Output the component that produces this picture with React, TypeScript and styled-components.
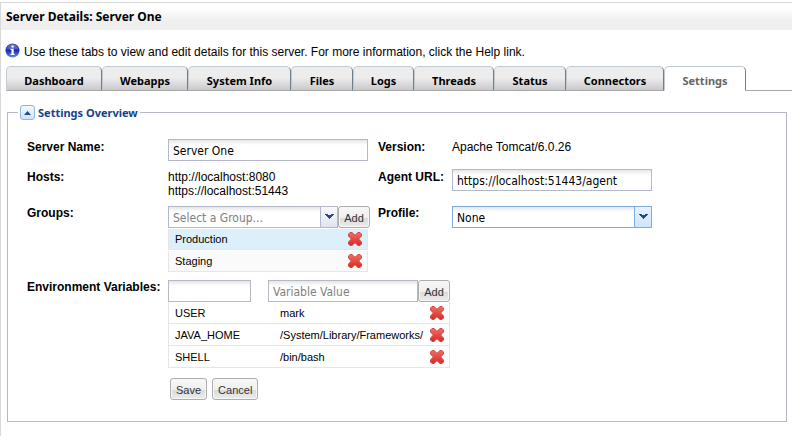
import React, { useState } from 'react';
import styled, { createGlobalStyle, css } from 'styled-components';

const heading = '"Noto Sans", Tahoma, sans-serif';
const ui = '"DejaVu Sans Condensed", Tahoma, sans-serif';
const body = '"Liberation Sans", Arial, sans-serif';

const GlobalStyle = createGlobalStyle`
  *, *::before, *::after { box-sizing: border-box; }
  body { margin: 0; background: #fff; color: #000; font: 12px/14px ${body}; }
  button, input, select { margin: 0; font: inherit; color: inherit; }
`;

const Page = styled.div`
  margin-top: 2px;
  min-height: calc(100vh - 2px);
  border: solid #d9d9d9;
  border-width: 1px 0 0 1px;
`;

const TitleBar = styled.header`
  height: 27px;
  padding: 0 5px;
  background: linear-gradient(#fff 20%, #efefef 65%);
`;

const Title = styled.h1`
  margin: 0;
  font: bold 12px/27px ${heading};
`;

const Notice = styled.p`
  display: flex;
  align-items: flex-start;
  gap: 4px;
  height: 16px;
  margin: 13px 4px 7px;
  line-height: 18px;
  svg { flex: none; }
`;

const TabBar = styled.div`
  display: flex;
  padding-left: 5px;
  &::after { content: ''; flex: 1; border-bottom: 1px solid #a9a9a9; }
`;

const Tab = styled.button<{ $active: boolean; $width: number }>`
  height: 25px;
  min-width: ${p => p.$width}px;
  padding: 4px 8px 0;
  white-space: nowrap;
  border: 1px solid #c3cbd2;
  border-right-color: #6f7e8c;
  border-bottom-color: #a9a9a9;
  border-radius: 5px 5px 0 0;
  background: linear-gradient(#ededed 45%, #e4e4e6 60%, #c9c9cc);
  font: bold 11px/18px ${heading};
  ${p => p.$active && css`
    border-bottom-color: #fff;
    background: #fff;
    color: #666;
  `}
`;

const Panel = styled.fieldset`
  min-width: 0;
  margin: 14px 5px 0 6px;
  padding: 19px 19px 21px;
  border: 1px solid #b5b8c8;
`;

const Legend = styled.legend`
  display: flex;
  align-items: center;
  gap: 3px;
  height: 15px;
  margin-left: -9px;
  padding: 0 2px;
  color: #15428b;
  font: bold 11px/15px ${heading};
`;

const Toggle = styled.button`
  display: flex;
  align-items: center;
  justify-content: center;
  width: 15px;
  height: 15px;
  padding: 0;
  border: 1px solid #8fb6dc;
  border-radius: 3px;
  background: linear-gradient(#f4f9fe, #cfe3f8);
`;

const Form = styled.form`
  display: grid;
  grid-template-columns: 141px 210px 74px 200px;
  row-gap: 8px;
  align-items: start;
`;

const Label = styled.label<{ $flush?: boolean }>`
  padding-top: ${p => (p.$flush ? 0 : 1)}px;
  font-weight: bold;
  white-space: nowrap;
`;

const Value = styled.div`
  padding-top: 1px;
`;

const Cell = styled.div<{ $wide?: boolean }>`
  width: ${p => (p.$wide ? 282 : 200)}px;
  ${p => p.$wide && css`grid-column: 2 / -1;`}
`;

const field = css`
  width: 100%;
  height: 22px;
  padding: 2px 4px 0;
  border: 1px solid #b5b8c8;
  border-radius: 0;
  outline: 0;
  background: linear-gradient(#e6e6e6, #fff 5px);
  font: 12px/18px ${ui};
  &::placeholder { color: #808080; opacity: 1; }
`;

const Input = styled.input`${field}`;

const EntryRow = styled.div<{ $split?: boolean }>`
  display: grid;
  grid-template-columns: ${p => (p.$split ? '83px 17px 150px 32px' : '170px 32px')};
  & > :last-child { grid-column: -2; }
  & > input + input { grid-column: 3; }
`;

const Combo = styled.div<{ $focus?: boolean }>`
  position: relative;
  height: 22px;
  select {
    ${field}
    appearance: none;
    padding-right: 20px;
    ${p => p.$focus ? 'border-color: #7eadd9;' : 'color: #808080;'}
  }
`;

const Trigger = styled.span<{ $focus?: boolean }>`
  position: absolute;
  top: 1px;
  right: 1px;
  bottom: 1px;
  display: flex;
  align-items: center;
  justify-content: center;
  width: 17px;
  border-left: 1px solid ${p => (p.$focus ? '#7eadd9' : '#b5b8c8')};
  background: ${p => (p.$focus ? 'linear-gradient(#e8f3ff, #cfe4fb)' : 'linear-gradient(#f8f9fc, #dfe5f0)')};
  pointer-events: none;
`;

const Button = styled.button`
  height: 22px;
  padding: 2px 5px 0;
  border: 1px solid #adadad;
  border-radius: 3px;
  box-shadow: inset 0 0 0 1px #f6f6f6;
  background: linear-gradient(#f7f7f7, #efefef 55%, #dadada 56%, #ededed);
  color: #333;
  font-size: 11px;
  line-height: 18px;
`;

const AddButton = styled(Button)`
  padding: 2px 0 0;
`;

const GroupList = styled.ul`
  margin: 0;
  padding: 0;
  list-style: none;
`;

const GroupItem = styled.li<{ $selected?: boolean }>`
  display: flex;
  align-items: center;
  justify-content: space-between;
  height: 21px;
  margin-top: 1px;
  padding: 0 4px 0 6px;
  border: 1px solid #e6e6e6;
  border-top: 0;
  background: ${p => (p.$selected ? '#dcf0fb' : '#fafafa')};
  font-size: 11px;
`;

const VarTable = styled.table`
  width: 100%;
  border-collapse: separate;
  border-spacing: 0;
  table-layout: fixed;
  font-size: 11px;
  td {
    height: 22px;
    padding: 1px 0 0 6px;
    border-bottom: 1px solid #e6e6e6;
    line-height: 20px;
  }
  td:first-child { width: 106px; border-left: 1px solid #e6e6e6; }
  td:last-child { width: 22px; padding: 1px 4px 0 1px; border-right: 1px solid #e6e6e6; }
`;

const DeleteButton = styled.button`
  display: flex;
  padding: 0;
  border: 0;
  background: none;
`;

const Actions = styled.div`
  grid-column: 2 / -1;
  display: flex;
  gap: 5px;
  padding: 2px 0 0 2px;
`;

const InfoIcon = () => (
  <svg width="15" height="15" viewBox="0 0 15 15" aria-hidden="true">
    <defs>
      <linearGradient id="info-ball" x2="0" y2="1">
        <stop offset="0" stopColor="#4656c4" />
        <stop offset=".5" stopColor="#1c2cb0" />
        <stop offset="1" stopColor="#5b8bee" />
      </linearGradient>
    </defs>
    <circle cx="7.5" cy="7.5" r="7" fill="url(#info-ball)" />
    <path d="M2 6.5a5.5 5 0 0 1 11 0Q7.5 5 2 6.5Z" fill="#fff" opacity=".2" />
    <path d="M6.5 2.5h2.200v2H6.500zM5.500 5.700h3.200v5h.9v1.200H5.500v-1.200h1V7h-1z" fill="#fff" />
  </svg>
);

const CollapseIcon = () => (
  <svg width="7" height="4" viewBox="0 0 7 4" aria-hidden="true"><path d="M3.5 0 7 4H0Z" fill="#1f4d91" /></svg>
);

const ArrowIcon = () => (
  <svg width="9" height="6" viewBox="0 0 9 6" shapeRendering="crispEdges" aria-hidden="true">
    <path d="M0 0h3v1h3V0h3v1H8v1H7v1H6v1H5v1H4V4H3V3H2V2H1V1H0Z" fill="#27488c" />
  </svg>
);

const DeleteIcon = () => (
  <svg width="16" height="16" viewBox="0 0 16 16" aria-hidden="true">
    <defs>
      <linearGradient id="delete-cross" x2="0" y2="1">
        <stop offset="0" stopColor="#ee7063" />
        <stop offset="1" stopColor="#dc2825" />
      </linearGradient>
    </defs>
    <path
      d="M3 1.5H5L8 4.300 11 1.5H13L14.5 3V5L11.700 8 14.5 11V13L13 14.5H11L8 11.700 5 14.5H3L1.5 13V11L4.300 8 1.5 5V3Z"
      fill="url(#delete-cross)" stroke="#d0403b" strokeWidth=".9" strokeLinejoin="round"
    />
  </svg>
);

const tabs = [
  { name: 'Dashboard', width: 96 },
  { name: 'Webapps', width: 86 },
  { name: 'System Info', width: 103 },
  { name: 'Files', width: 62 },
  { name: 'Logs', width: 61 },
  { name: 'Threads', width: 80 },
  { name: 'Status', width: 72 },
  { name: 'Connectors', width: 98 },
  { name: 'Settings', width: 82 },
];
const groups = ['Production', 'Staging'];
const variables = [
  ['USER', 'mark'],
  ['JAVA_HOME', '/System/Library/Frameworks/'],
  ['SHELL', '/bin/bash'],
];

export default function App() {
  const [active, setActive] = useState('Settings');
  return (
    <>
      <GlobalStyle />
      <Page>
        <TitleBar><Title>Server Details: Server One</Title></TitleBar>
        <Notice>
          <InfoIcon />
          <span>Use these tabs to view and edit details for this server. For more information, click the Help link.</span>
        </Notice>
        <TabBar role="tablist">
          {tabs.map(({ name, width }) => (
            <Tab key={name} type="button" role="tab" aria-selected={name === active} $active={name === active} $width={width} onClick={() => setActive(name)}>
              {name}
            </Tab>
          ))}
        </TabBar>
        <Panel>
          <Legend>
            <Toggle type="button" aria-label="Collapse section"><CollapseIcon /></Toggle>
            Settings Overview
          </Legend>
          <Form onSubmit={e => e.preventDefault()}>
            <Label htmlFor="name">Server Name:</Label>
            <Cell><Input id="name" defaultValue="Server One" /></Cell>
            <Label as="span">Version:</Label>
            <Value>Apache Tomcat/6.0.26</Value>

            <Label as="span">Hosts:</Label>
            <Value>http://localhost:8080<br />https://localhost:51443</Value>
            <Label htmlFor="agent">Agent URL:</Label>
            <Cell><Input id="agent" defaultValue="https://localhost:51443/agent" /></Cell>

            <Label htmlFor="group" $flush>Groups:</Label>
            <Cell>
              <EntryRow>
                <Combo>
                  <select id="group"><option>Select a Group...</option></select>
                  <Trigger><ArrowIcon /></Trigger>
                </Combo>
                <AddButton type="button">Add</AddButton>
              </EntryRow>
              <GroupList>
                {groups.map((name, i) => (
                  <GroupItem key={name} $selected={i === 0}>
                    {name}
                    <DeleteButton type="button" aria-label={`Remove ${name}`}><DeleteIcon /></DeleteButton>
                  </GroupItem>
                ))}
              </GroupList>
            </Cell>
            <Label htmlFor="profile" $flush>Profile:</Label>
            <Cell>
              <Combo $focus>
                <select id="profile"><option>None</option></select>
                <Trigger $focus><ArrowIcon /></Trigger>
              </Combo>
            </Cell>

            <Label htmlFor="variable" $flush>Environment Variables:</Label>
            <Cell $wide>
              <EntryRow $split>
                <Input id="variable" />
                <Input aria-label="Variable Value" placeholder="Variable Value" />
                <AddButton type="button">Add</AddButton>
              </EntryRow>
              <VarTable>
                <tbody>
                  {variables.map(([name, value]) => (
                    <tr key={name}>
                      <td>{name}</td>
                      <td>{value}</td>
                      <td><DeleteButton type="button" aria-label={`Remove ${name}`}><DeleteIcon /></DeleteButton></td>
                    </tr>
                  ))}
                </tbody>
              </VarTable>
            </Cell>

            <Actions>
              <Button type="submit">Save</Button>
              <Button type="button">Cancel</Button>
            </Actions>
          </Form>
        </Panel>
      </Page>
    </>
  );
}
